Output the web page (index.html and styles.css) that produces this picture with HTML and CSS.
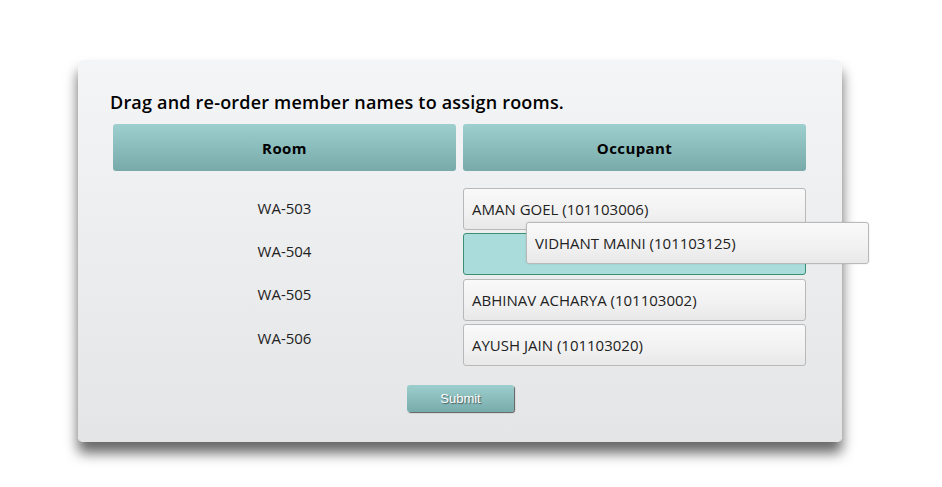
FILE: index.html
```html
<!DOCTYPE html>
<html>
<head>
<meta charset="utf-8">
<link rel="stylesheet" href="styles.css">
</head>
<body>
<div class="card">
  <h1 class="title">Drag and re-order member names to assign rooms.</h1>
  <div class="heads">
    <div class="head">Room</div>
    <div class="head">Occupant</div>
  </div>
  <div class="rows">
    <ul class="rooms">
      <li>WA-503</li>
      <li>WA-504</li>
      <li>WA-505</li>
      <li>WA-506</li>
    </ul>
    <ul class="occupants">
      <li class="item">AMAN GOEL (101103006)</li>
      <li class="placeholder"></li>
      <li class="item">ABHINAV ACHARYA (101103002)</li>
      <li class="item">AYUSH JAIN (101103020)</li>
      <li class="item dragging">VIDHANT MAINI (101103125)</li>
    </ul>
  </div>
  <div class="actions">
    <button class="submit">Submit</button>
  </div>
</div>
</body>
</html>
```
FILE: styles.css
```css
html, body {
  margin: 0;
  padding: 0;
  background: #ffffff;
}
body {
  font-family: "Open Sans", "Noto Sans", sans-serif;
  color: #111;
  padding: 60px 0 45px 78px;
  min-height: 100vh;
  box-sizing: border-box;
}
.card {
  width: 764px;
  height: 382px;
  box-sizing: border-box;
  padding: 29px 36px 0 35px;
  border-radius: 5px;
  background: linear-gradient(#f4f5f7, #e4e5e7);
  box-shadow: 0 11px 13px rgba(0, 0, 0, 0.6);
}
.title {
  margin: 0 0 0 -3px;
  font-size: 18px;
  line-height: 26px;
  font-weight: 600;
  letter-spacing: 0.2px;
  color: #000;
  height: 35px;
}
.heads {
  display: grid;
  grid-template-columns: 343px 343px;
  column-gap: 7px;
}
.head {
  height: 47px;
  border-radius: 3px;
  background: linear-gradient(#9ecfcf, #78aaaa);
  display: flex;
  align-items: center;
  justify-content: center;
  font-weight: 700;
  font-size: 15px;
  color: #000;
  letter-spacing: 0.4px;
}
.rows {
  margin-top: 17px;
  display: grid;
  grid-template-columns: 343px 343px;
  column-gap: 7px;
}
.rooms, .occupants {
  list-style: none;
  margin: 0;
  padding: 0;
}
.rooms {
  margin-top: -2px;
}
.rooms li {
  height: 43.4px;
  display: flex;
  align-items: center;
  justify-content: center;
  font-size: 15px;
  color: #222;
}
.occupants {
  position: relative;
  display: flex;
  flex-direction: column;
  gap: 3.4px;
}
.item, .placeholder {
  height: 42px;
  box-sizing: border-box;
  border-radius: 3px;
}
.item {
  border: 1px solid #b9b9b9;
  background: linear-gradient(#f9f9f9, #f1f1f1 60%, #e8e8e8);
  display: flex;
  align-items: center;
  padding-left: 8px;
  font-size: 15px;
  color: #222;
}
.placeholder {
  border: 1px solid #3d8f72;
  background: #aadcdb;
}
.dragging {
  position: absolute;
  left: 63px;
  top: 34px;
  width: 343px;
  box-shadow: 0 0 2px rgba(0, 0, 0, 0.12);
}
.actions {
  margin-top: 19px;
  display: flex;
  justify-content: center;
  padding-left: 2px;
}
.submit {
  width: 107px;
  height: 27px;
  border: none;
  border-radius: 3px;
  background: linear-gradient(#9dcece, #78abab);
  box-shadow: 1px 1px 1px rgba(0, 0, 0, 0.6);
  color: #fff;
  font-family: "Liberation Sans", Arial, sans-serif;
  font-size: 13px;
  text-shadow: 1px 1px 1px rgba(0, 0, 0, 0.5);
  padding: 0;
}
```
